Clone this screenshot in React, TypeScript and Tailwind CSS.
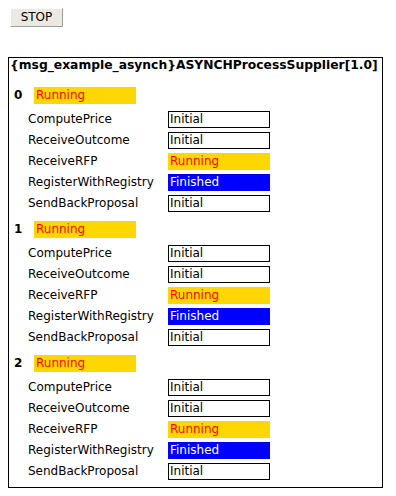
import React from 'react';

type Status = 'Initial' | 'Running' | 'Finished';

interface Task {
  name: string;
  status: Status;
}

const tasks: Task[] = [
  { name: 'ComputePrice', status: 'Initial' },
  { name: 'ReceiveOutcome', status: 'Initial' },
  { name: 'ReceiveRFP', status: 'Running' },
  { name: 'RegisterWithRegistry', status: 'Finished' },
  { name: 'SendBackProposal', status: 'Initial' },
];

const instances = [0, 1, 2];

const StatusBox = ({ status }: { status: Status }) => {
  const style =
    status === 'Running'
      ? 'bg-[#ffd700] border-[#ffd700] text-[#ff0000]'
      : status === 'Finished'
        ? 'bg-[#0000ff] border-[#0000ff] text-white'
        : 'bg-white border-black text-black';
  return (
    <div className={`w-[102px] h-[17px] border px-[1px] leading-[15px] ${style}`}>
      {status}
    </div>
  );
};

const App = () => {
  return (
    <div className="pt-[8px] pb-[8px] font-['DejaVu_Sans',sans-serif] text-[12px] text-black bg-white min-h-[496px]">
      <button className="ml-[10px] w-[53px] h-[19px] bg-[#ece9e2] border border-t-white border-l-white border-r-[#9d9d9d] border-b-[#9d9d9d] text-[12px] leading-[17px] text-black">
        STOP
      </button>

      <div className="ml-[8px] mt-[30px] w-[375px] border border-black pb-[7px]">
        <div className="pl-[1px] h-[14px] leading-[14px] text-[12.3px] font-bold whitespace-nowrap">
          {'{msg_example_asynch}ASYNCHProcessSupplier[1.0]'}
        </div>

        {instances.map((n, i) => (
          <div key={n} className={i === 0 ? 'mt-[15px]' : 'mt-[9px]'}>
            <div className="flex items-center h-[17px]">
              <span className="w-[25px] pl-[5px] font-bold leading-[17px]">{n}</span>
              <StatusBox status="Running" />
            </div>
            <div className="mt-[7px] flex flex-col gap-[4px]">
              {tasks.map(task => (
                <div key={task.name} className="flex items-center h-[17px]">
                  <span className="w-[159px] pl-[19px] leading-[17px] whitespace-nowrap">{task.name}</span>
                  <StatusBox status={task.status} />
                </div>
              ))}
            </div>
          </div>
        ))}
      </div>
    </div>
  );
};

export default App;
